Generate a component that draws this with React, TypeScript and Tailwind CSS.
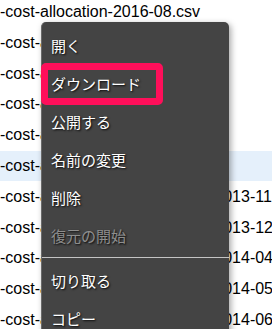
import React from "react";

const files = [
  "-cost-allocation-2016-08.csv",
  "-cost-allocation-2016-07.csv",
  "-cost-allocation-2016-06.csv",
  "-cost-allocation-2016-05.csv",
  "-cost-allocation-2016-04.csv",
  "-cost-allocation-2016-03.csv",
  "-cost-allocation-with-resource-2013-11.csv",
  "-cost-allocation-with-resource-2013-12.csv",
  "-cost-allocation-with-resource-2014-04.csv",
  "-cost-allocation-with-resource-2014-05.csv",
  "-cost-allocation-with-resource-2014-06.csv",
];

type Item = { label: string; disabled?: boolean; divider?: boolean };

const items: Item[] = [
  { label: "開く" },
  { label: "ダウンロード" },
  { label: "公開する" },
  { label: "名前の変更" },
  { label: "削除" },
  { label: "復元の開始", disabled: true, divider: true },
  { label: "切り取る" },
  { label: "コピー" },
];

export default function App() {
  return (
    <div className="relative h-[329px] w-[272px] overflow-hidden bg-white">
      {/* file list */}
      <div className="-mt-[3.4px] flex flex-col">
        {files.map((f, i) => (
          <div
            key={i}
            className={`flex h-[30.8px] items-center whitespace-nowrap text-[16px] text-black ${
              i === 5 ? "bg-[#e5f0fb]" : ""
            }`}
            style={{ fontFamily: '"Liberation Sans", Arial, sans-serif' }}
          >
            {f}
          </div>
        ))}
      </div>

      {/* context menu */}
      <div
        className="absolute left-[41px] top-[22px] w-[188px] rounded-[5px] border-l border-[#6a6a6a] bg-[#444444] pt-[5px] pb-2 shadow-[2px_2px_6px_rgba(0,0,0,0.35)]"
        style={{ fontFamily: '"Noto Sans CJK JP", "Noto Sans", sans-serif' }}
      >
        {items.map((it) => (
          <React.Fragment key={it.label}>
            <div
              className={`flex h-[38px] items-center pl-[9px] text-[15px] ${
                it.disabled ? "text-[#8e8e8e]" : "text-white"
              } [text-shadow:1px_1px_2px_rgba(0,0,0,0.9)]`}
            >
              {it.label}
            </div>
            {it.divider ? <div className="mt-[2px] mb-[4px] h-px bg-[#c4c4c4]" /> : null}
          </React.Fragment>
        ))}
      </div>

      {/* annotation box */}
      <div className="absolute left-[41px] top-[63px] h-[42px] w-[122px] rounded-[5px] border-[7px] border-[#ff0f5a]" />
    </div>
  );
}
